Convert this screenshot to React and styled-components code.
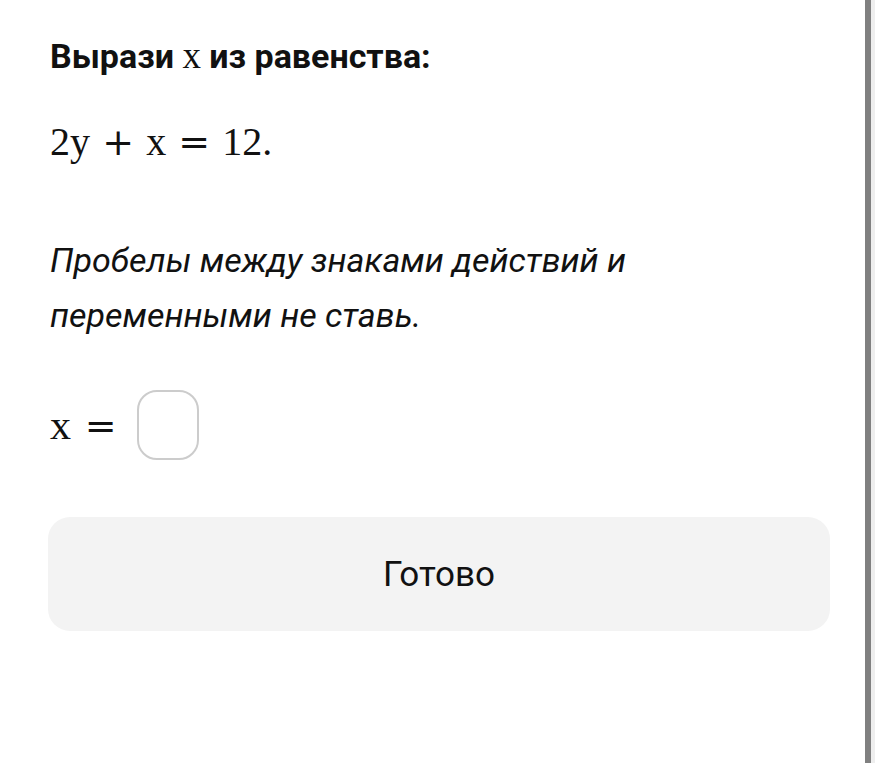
import React from "react";
import styled, { createGlobalStyle } from "styled-components";

const GlobalStyle = createGlobalStyle`
  html, body {
    margin: 0;
    padding: 0;
    background: #ffffff;
  }
  body {
    font-family: Roboto, "Noto Sans", sans-serif;
    color: #111111;
  }
`;

function App() {
  return (
    <>
      <GlobalStyle />
      <Page>
        <Task>
          <Title>
            Вырази <MathVar>x</MathVar> из равенства:
          </Title>
          <Formula>
            2y<Op>+</Op>x<Op>=</Op>12.
          </Formula>
          <Hint>Пробелы между знаками действий и переменными не ставь.</Hint>
          <AnswerRow>
            <Formula as="span">
              x<Op>=</Op>
            </Formula>
            <AnswerBox type="text" />
          </AnswerRow>
          <DoneButton>Готово</DoneButton>
        </Task>
        <SideBar />
      </Page>
    </>
  );
}

const Page = styled.div`
  display: flex;
  flex-direction: row;
  min-height: 763px;
`;

const Task = styled.div`
  flex: 1;
  display: flex;
  flex-direction: column;
  align-items: flex-start;
  padding: 34px 35px 0px 50px;
`;

const Title = styled.div`
  font-size: 34px;
  font-weight: 700;
  line-height: 44px;
`;

const MathVar = styled.span`
  font-family: "Liberation Serif", serif;
  font-weight: 400;
  font-size: 37px;
`;

const Formula = styled.div`
  font-family: "Liberation Serif", serif;
  font-size: 40px;
  line-height: 48px;
  margin-top: 40px;
`;

const Op = styled.span`
  font-family: "DejaVu Serif", serif;
  font-size: 38px;
  margin: 0 0.32em;
`;

const Hint = styled.div`
  font-style: italic;
  font-size: 34px;
  line-height: 55px;
  margin-top: 67px;
  max-width: 620px;
`;

const AnswerRow = styled.div`
  display: flex;
  flex-direction: row;
  align-items: center;
  margin-top: 47px;
  ${Formula} {
    margin-top: 0;
    font-size: 42px;
  }
  ${Op} {
    margin: 0 0 0 0.36em;
  }
`;

const AnswerBox = styled.input`
  width: 62px;
  height: 70px;
  margin-left: 20px;
  box-sizing: border-box;
  border: 2px solid #cccccc;
  border-radius: 20px;
  background: #ffffff;
  outline: none;
`;

const DoneButton = styled.button`
  align-self: stretch;
  margin: 57px 0px 0px -2px;
  height: 114px;
  border: none;
  border-radius: 22px;
  background: #f3f3f3;
  font-family: Roboto, "Noto Sans", sans-serif;
  font-size: 35px;
  color: #111111;
`;

const SideBar = styled.div`
  width: 6px;
  margin-right: 8px;
  background: #808080;
  box-shadow: 4px 0 0 #eeeeee;
`;

export default App;
